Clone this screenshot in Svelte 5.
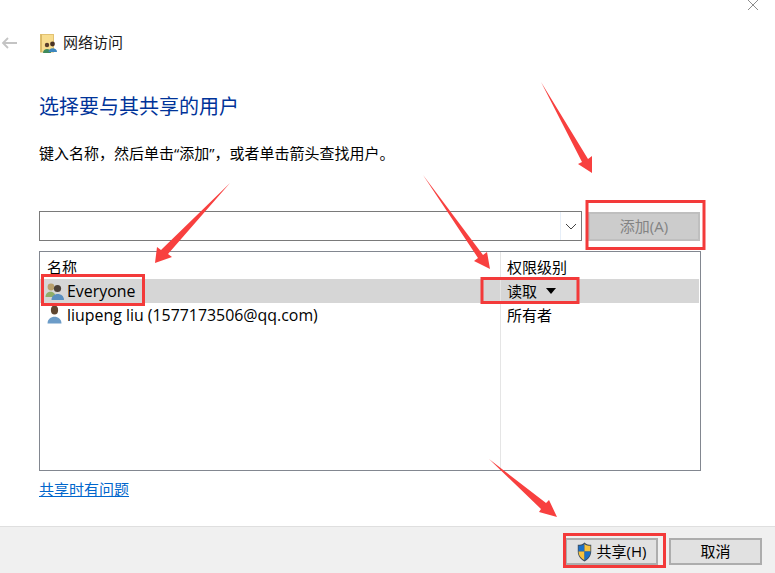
<script lang="ts">
  const users = [
    { name: "Everyone", level: "读取", icon: "group", selected: true },
    { name: "liupeng liu (1577173506@qq.com)", level: "所有者", icon: "user", selected: false },
  ];

  // red markup drawn over the dialog: [x, y, w, h]
  const boxes = [
    [587, 201.5, 117, 47],
    [42.5, 275.5, 101, 29],
    [482, 278.5, 96, 24],
    [564.5, 534.5, 100, 32],
  ];

  const arrows = [
    "541,82 588,159 592,156 592,173 578,164 582,162",
    "423,175 483,255 487,252 490,269 474,261 478,258",
    "230,183 168,254 172,257 155,263 157,247 161,250",
    "489,459 546,503 549,500 557,517 539,512 541,509",
  ];
</script>

<div class="dialog">
  <svg class="close" width="16" height="12" viewBox="0 0 16 12">
    <path d="M2 0 L12 10 M12 0 L2 10" stroke="#8c8c8c" stroke-width="1" fill="none" />
  </svg>

  <main class="content">
    <header class="nav">
      <svg class="back" width="17" height="12" viewBox="0 0 17 12">
        <path d="M16 6 H2 M7 1 L2 6 L7 11" stroke="#c4c4c4" stroke-width="1.8" fill="none" />
      </svg>
      <svg class="folder" width="18" height="19" viewBox="0 0 18 19">
        <rect x="0.5" y="0.5" width="13" height="17.5" fill="#f8dd8f" stroke="#e2c272" />
        <rect x="0.5" y="0.5" width="1.5" height="17.5" fill="#d9b866" />
        <circle cx="7" cy="11" r="2.2" fill="#5a3d2b" />
        <path d="M3 19 C3 13.5 11 13.5 11 19 Z" fill="#3f8a5c" />
        <circle cx="12.5" cy="10" r="2.4" fill="#4a3324" />
        <path d="M8.5 18 C8.5 13 17 13 17 18 Z" fill="#3c86bd" />
      </svg>
      <span class="title">网络访问</span>
    </header>

    <h1>选择要与其共享的用户</h1>
    <p class="hint">键入名称，然后单击“添加”，或者单击箭头查找用户。</p>

    <div class="picker">
      <div class="combo">
        <span class="combo-btn">
          <svg width="12" height="7" viewBox="0 0 12 7">
            <path d="M1 1 L6 6 L11 1" stroke="#444" stroke-width="1" fill="none" />
          </svg>
        </span>
      </div>
      <button class="btn add" disabled>添加(A)</button>
    </div>

    <div class="list">
      <div class="row head">
        <div class="name">名称</div>
        <div class="level">权限级别</div>
      </div>
      {#each users as u}
        <div class={["row", u.selected && "selected"]}>
          <div class="name">
            {#if u.icon === "group"}
              <svg width="20" height="19" viewBox="0 0 20 19">
                <circle cx="6" cy="5" r="3.4" fill="#b9a06c" />
                <path d="M0.5 15 C0.5 8 10.5 8 10.5 15 Z" fill="#8fae68" />
                <circle cx="12.5" cy="6.5" r="3.6" fill="#4c4138" />
                <path d="M6.5 18 C6.5 10 19 10 19 18 Z" fill="#5a8fc0" />
              </svg>
            {:else}
              <svg width="20" height="20" viewBox="0 0 20 20">
                <ellipse cx="9.5" cy="5" rx="3.6" ry="4.5" fill="#5f4630" />
                <path d="M2.5 18.5 C2.5 9.5 16.5 9.5 16.5 18.5 Z" fill="#6c9cc8" />
              </svg>
            {/if}
            <span>{u.name}</span>
          </div>
          <div class="level">
            {u.level}
            {#if u.selected}<i class="caret"></i>{/if}
          </div>
        </div>
      {/each}
      <div class="row filler">
        <div class="name"></div>
        <div class="level"></div>
      </div>
    </div>

    <a class="help" href="#help">共享时有问题</a>
  </main>

  <footer class="actions">
    <button class="btn share">
      <svg width="15" height="20" viewBox="0 0 19 21" preserveAspectRatio="none">
        <path d="M9.5 0.5 C12 2.5 15 3 18 3 V10 C18 15 14 18.5 9.5 20.5 C5 18.5 1 15 1 10 V3 C4 3 7 2.5 9.5 0.5 Z" fill="#3f4f5f" />
        <path d="M9.5 2 V10 H2 V4 C4.5 4 7.5 3.5 9.5 2 Z" fill="#1a70c8" />
        <path d="M9.5 2 C11.5 3.5 14.5 4 17 4 V10 H9.5 Z" fill="#f7c23c" />
        <path d="M2 10 H9.5 V19 C5.5 17.5 2 14.5 2 10 Z" fill="#f7c23c" />
        <path d="M9.5 10 H17 C17 14.5 13.5 17.5 9.5 19 Z" fill="#1a70c8" />
      </svg>
      <span class="label">共享(H)</span>
    </button>
    <button class="btn cancel"><span class="label">取消</span></button>
  </footer>

  <svg class="markup" width="775" height="573" viewBox="0 0 775 573">
    {#each boxes as b}
      <rect x={b[0]} y={b[1]} width={b[2]} height={b[3]} fill="none" stroke="#f33a3a" stroke-width="3" />
    {/each}
    {#each arrows as a}
      <polygon points={a} fill="#f8403f" />
    {/each}
  </svg>
</div>

<style>
  :global(body) {
    background: #fff;
  }

  .dialog {
    position: relative;
    display: flex;
    flex-direction: column;
    width: 775px;
    height: 573px;
    overflow: hidden;
    background: #fff;
    color: #000;
    font-family: "Open Sans", "Noto Sans CJK SC", sans-serif;
    font-size: 15px;
  }

  .close {
    position: absolute;
    top: 0;
    right: 13px;
  }

  .markup {
    position: absolute;
    inset: 0;
    pointer-events: none;
  }

  .content {
    flex: 1;
    display: flex;
    flex-direction: column;
    padding: 0 74px 0 39px;
  }

  .nav {
    display: flex;
    align-items: center;
    height: 24px;
    margin: 31px 0 0 -38px;
  }

  .back {
    margin-right: 22px;
  }

  .folder {
    margin-right: 5px;
  }

  .title {
    color: #1a1a1a;
    margin-bottom: 3px;
  }

  h1 {
    margin: 38px 0 0;
    height: 27px;
    font-size: 20px;
    line-height: 27px;
    font-weight: 400;
    color: #003399;
  }

  .hint {
    margin: 23px 0 0;
    height: 20px;
    line-height: 20px;
  }

  .picker {
    display: flex;
    justify-content: space-between;
    margin-top: 48px;
    width: 661px;
    align-items: center;
  }

  .combo {
    display: flex;
    justify-content: flex-end;
    box-sizing: border-box;
    width: 543px;
    height: 30px;
    border: 1px solid #7a7a7a;
  }

  .combo-btn {
    display: flex;
    align-items: center;
    justify-content: center;
    width: 20px;
    border-left: 1px solid #e6eef8;
  }

  .btn {
    box-sizing: border-box;
    border: 2px solid #adadad;
    background: #e1e1e1;
    font: inherit;
    padding: 0;
    color: #000;
    display: flex;
    align-items: center;
    justify-content: center;
  }

  .add {
    width: 112px;
    height: 29px;
    padding-bottom: 2px;
    border-color: #bfbfbf;
    background: #cccccc;
    color: #838383;
  }

  .list {
    display: flex;
    flex-direction: column;
    box-sizing: border-box;
    width: 662px;
    height: 220px;
    margin-top: 10px;
    border: 1px solid #828790;
    padding-right: 1px;
  }

  .row {
    display: grid;
    grid-template-columns: 460px 1fr;
    height: 24px;
    line-height: 24px;
  }

  .row.head {
    height: 27px;
    line-height: 30px;
  }

  .row.selected {
    background: #d6d6d6;
  }

  .row.filler {
    flex: 1;
  }

  .name {
    display: flex;
    align-items: center;
    gap: 2px;
    padding-left: 5px;
    font-size: 15.9px;
    white-space: nowrap;
  }

  .head .name {
    padding-left: 7px;
    font-size: 15px;
  }

  .level {
    padding-left: 6px;
    border-left: 1px solid #e5e5e5;
    display: flex;
    align-items: center;
    gap: 9px;
  }

  .caret {
    width: 0;
    height: 0;
    border-left: 5.5px solid transparent;
    border-right: 5.5px solid transparent;
    border-top: 6px solid #000;
  }

  .help {
    margin-top: 8px;
    color: #0066cc;
    line-height: 20px;
    align-self: flex-start;
  }

  .actions {
    display: flex;
    justify-content: flex-end;
    gap: 11px;
    box-sizing: border-box;
    height: 47px;
    padding: 11px 13px 0 0;
    background: #f0f0f0;
    border-top: 1px solid #dfdfdf;
  }

  .share,
  .cancel {
    height: 27px;
  }

  .label {
    margin-bottom: 2px;
  }

  .share {
    width: 93px;
    gap: 5px;
  }

  .cancel {
    width: 93px;
  }
</style>
